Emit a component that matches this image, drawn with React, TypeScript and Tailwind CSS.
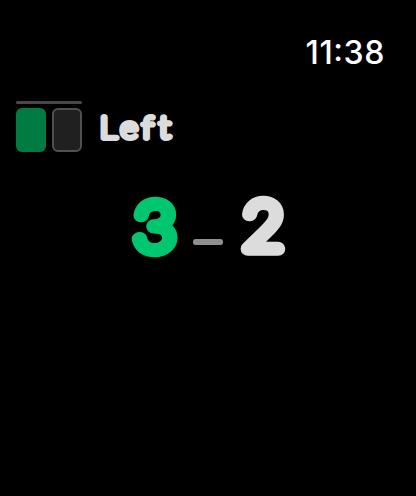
interface LetteringProps {
  text: string;
  x: string;
  y: number;
  width: number;
  height: number;
  size: number;
  stroke: number;
  stretch: number;
  className: string;
}

// Rounded lettering: a hairline face, slightly widened, with a thick round-joined outline
const Lettering = ({ text, x, y, width, height, size, stroke, stretch, className }: LetteringProps) => (
  <svg width={width} height={height} className={`block shrink-0 overflow-visible font-['Lato',sans-serif] font-thin ${className}`}>
    <text
      x={x}
      y={y}
      transform={`scale(${stretch} 1)`}
      fontSize={size}
      fill="currentColor"
      stroke="currentColor"
      strokeWidth={stroke}
      strokeLinejoin="round"
    >
      {text}
    </text>
  </svg>
);

const StatusBar = () => (
  <div className="flex h-[100px] justify-end pt-[33px] pr-[31px]">
    <time className="font-['Inter',sans-serif] text-[32px] leading-[40px] font-medium tracking-[0.6px] text-white">
      11<span className="align-[3px] leading-none">:</span>38
    </time>
  </div>
);

const CourtSide = () => (
  <div className="flex flex-col gap-[4px] pt-px">
    <div className="h-[3px] w-[66px] rounded-full bg-[#48484a]" />
    <div className="flex gap-[6px]">
      <div className="h-[44px] w-[30px] rounded-[6px] bg-[#007c43]" />
      <div className="h-[44px] w-[30px] rounded-[6px] border-2 border-[#505050] bg-[#202020]" />
    </div>
  </div>
);

const App = () => {
  return (
    <div className="h-[496px] w-[416px] overflow-hidden bg-black">
      <StatusBar />
      <div className="flex items-start gap-[16px] pl-[16px]">
        <CourtSide />
        <Lettering
          text="Left"
          x="1.8 20.2 39.4 54.8"
          y={38.2}
          width={80}
          height={52}
          size={29.8}
          stroke={6}
          stretch={1.12}
          className="text-[#dcdcdc]"
        />
      </div>
      <div className="flex items-start pt-[44px] pl-[128px]">
        <Lettering
          text="3"
          x="6"
          y={53.8}
          width={56}
          height={66}
          size={65.5}
          stroke={13.6}
          stretch={1.08}
          className="text-[#00c66f]"
        />
        <div className="mt-[43px] ml-[9px] h-[6px] w-[30px] rounded-[2.5px] bg-[#8e8e90]" />
        <Lettering
          text="2"
          x="19"
          y={53.2}
          width={70}
          height={66}
          size={65}
          stroke={13.6}
          stretch={1.06}
          className="text-[#dcdcdc]"
        />
      </div>
    </div>
  );
};

export default App;
